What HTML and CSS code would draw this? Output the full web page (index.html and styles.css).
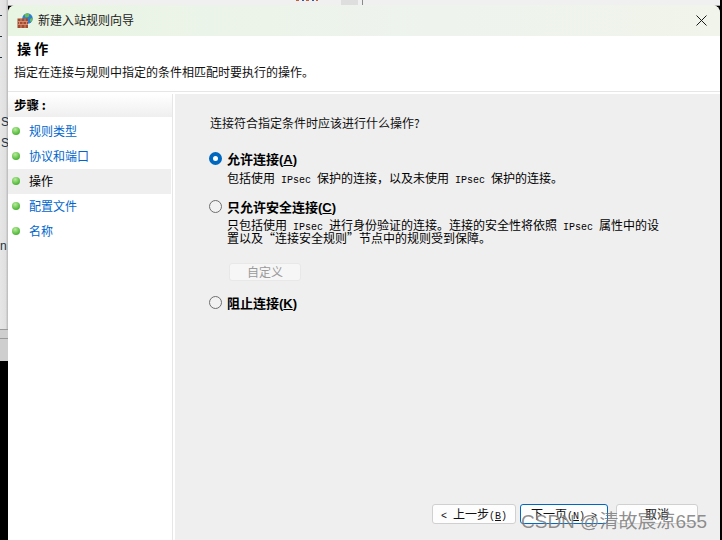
FILE: index.html
```html
<!DOCTYPE html>
<html lang="zh-CN">
<head>
<meta charset="utf-8">
<title>新建入站规则向导</title>
<link rel="stylesheet" href="styles.css">
</head>
<body>
<div class="desktop">
  <div class="top-strip">
    <span class="strip-bits"></span>
    <span class="strip-panel"></span>
    <span class="strip-line l1"></span>
  </div>
  <div class="left-strip">
    <span class="tick t1"></span>
    <span class="tick t2"></span>
    <span class="tick t3"></span>
    <span class="strip-char c4">S</span>
    <span class="strip-char c5">S</span>
    <span class="strip-char c6">n</span>
    <span class="band b1"></span>
    <span class="band b2"></span>
  </div>
  <div class="dialog">
    <div class="titlebar">
      <svg class="app-icon" width="16" height="15" viewBox="0 0 16 15">
        <circle cx="10.5" cy="5.5" r="5.2" fill="#2f7fd0"/>
        <path d="M7.5 1.4c1.800-1.200 3.800-1 5 0l-1 2.600-3 .6zM13 6l2.600-1.200-.4 3-2.200 1z" fill="#6cc04a"/>
        <rect x="0.500" y="5.500" width="10.500" height="9.500" fill="#a34a30"/>
        <path d="M0.500 8.500h10.500M0.500 11.500h10.500M4 5.500v3M8 5.500v3M2.500 8.500v3M6 8.500v3M9.500 8.500v3M4 11.500v3.500M8 11.500v3.500" stroke="#d99a80" stroke-width="0.800" fill="none"/>
      </svg>
      <span class="title-text">新建入站规则向导</span>
      <svg class="close" width="11" height="11" viewBox="0 0 11 11"><path d="M.5.5l10 10M10.500.5l-10 10" stroke="#1a1a1a" stroke-width="1" fill="none"/></svg>
    </div>
    <div class="header">
      <div class="heading">操 作</div>
      <div class="subheading">指定在连接与规则中指定的条件相匹配时要执行的操作。</div>
    </div>
    <div class="body">
      <aside class="sidebar">
        <div class="steps-head">步骤 :</div>
        <ul class="steps">
          <li class="step"><span class="dot"></span><span class="link">规则类型</span></li>
          <li class="step"><span class="dot"></span><span class="link">协议和端口</span></li>
          <li class="step current"><span class="dot"></span><span>操作</span></li>
          <li class="step"><span class="dot"></span><span class="link">配置文件</span></li>
          <li class="step"><span class="dot"></span><span class="link">名称</span></li>
        </ul>
      </aside>
      <main class="content">
        <p class="question">连接符合指定条件时应该进行什么操作?</p>
        <div class="option first">
          <span class="radio checked"></span>
          <div class="option-text">
            <div class="option-label">允许连接<span class="key">(<u>A</u>)</span></div>
            <div class="option-desc">包括使用<span class="mono"> IPsec </span>保护的连接&#xFF0C;以及未使用<span class="mono"> IPsec </span>保护的连接。</div>
          </div>
        </div>
        <div class="option second">
          <span class="radio"></span>
          <div class="option-text">
            <div class="option-label">只允许安全连接<span class="key">(<u>C</u>)</span></div>
            <div class="option-desc tight">只包括使用<span class="mono"> IPsec </span>进行身份验证的连接。连接的安全性将依照<span class="mono"> IPsec </span>属性中的设置以及“连接安全规则”节点中的规则受到保障。</div>
            <button class="btn custom" disabled>自定义</button>
          </div>
        </div>
        <div class="option third">
          <span class="radio"></span>
          <div class="option-text">
            <div class="option-label">阻止连接<span class="key">(<u>K</u>)</span></div>
          </div>
        </div>
        <div class="footer">
          <button class="btn nav back"><span class="mono">&lt; </span>上一步<span class="mono">(<u>B</u>)</span></button>
          <button class="btn nav primary">下一页<span class="mono">(<u>N</u>) &gt;</span></button>
          <button class="btn nav cancel">取消</button>
        </div>
      </main>
    </div>
  </div>
  <div class="watermark">CSDN @清故宸凉655</div>
</div>
</body>
</html>
```
FILE: styles.css
```css
* { box-sizing: border-box; }
html, body { margin: 0; padding: 0; }
body { width: 722px; height: 540px; overflow: hidden; font-family: "Noto Sans CJK SC", "Liberation Sans", sans-serif; }
.desktop { position: relative; width: 722px; height: 540px; background: #000; overflow: hidden; }
.top-strip { position: absolute; left: 0; top: 0; width: 720px; height: 6px; background: #f0f0f0; border-bottom: 1px solid #a8a8a8; }
.strip-bits { position: absolute; left: 296px; top: 0; width: 22px; height: 1px; background: repeating-linear-gradient(90deg, #c0603a 0 3px, #f0f0f0 3px 6px, #3a5a9a 6px 8px, #f0f0f0 8px 10px); }
.strip-panel { position: absolute; left: 341px; top: 0; width: 17px; height: 5px; background: #dedede; }
.strip-line { position: absolute; top: 0; width: 1px; height: 5px; background: #8a8a8a; }
.l1 { left: 362px; }
.left-strip { position: absolute; left: 0; top: 0; width: 8px; height: 361px; background: linear-gradient(rgba(0, 0, 0, 0) 329px, #cecece 329px), linear-gradient(90deg, #e6e6e6, #e0e0e0 70%, #b8b8b8); overflow: hidden; }
.tick { position: absolute; left: 0; width: 2px; height: 1px; background: #234; }
.t1 { top: 15px; } .t2 { top: 36px; } .t3 { top: 57px; }
.strip-char { position: absolute; left: 1px; font-size: 12px; line-height: 14px; color: #234; font-family: "Liberation Sans", sans-serif; }
.c4 { top: 115px; } .c5 { top: 136px; } .c6 { top: 239px; left: 0; }
.band { position: absolute; left: 0; width: 8px; height: 1px; background: #9a9a9a; }
.b1 { top: 329px; } .b2 { top: 338px; }
.dialog { position: absolute; left: 8px; top: 5px; width: 712px; height: 535px; background: #fff; border-radius: 8px 8px 0 0; display: flex; flex-direction: column; overflow: hidden; }
.titlebar { height: 31px; flex: none; background: linear-gradient(90deg, #e9f5e3, #eef3ee 60%, #f0f4ea); display: flex; align-items: center; padding: 0 13px 1px 9px; font-size: 12px; color: #1a1a1a; }
.app-icon { flex: none; margin-right: 5px; }
.title-text { flex: 1; line-height: 16px; }
.close { flex: none; }
.header { height: 56px; flex: none; padding: 0 6px; border-bottom: 1px solid #e6e6e6; }
.heading { font-size: 14px; font-weight: 700; line-height: 20px; padding: 2px 0 0 3px; height: 22px; color: #000; }
.subheading { font-size: 12px; line-height: 16px; margin-top: 6px; color: #111; }
.body { flex: 1; display: flex; background: #fff; padding-top: 2px; min-height: 0; }
.sidebar { width: 165px; flex: none; background: #fff; border-right: 1px solid #e6e6e6; margin-right: 2px; }
.steps-head { height: 23px; padding-left: 6px; font-size: 12.5px; font-weight: 700; line-height: 22px; background: linear-gradient(#fff, #efefef); color: #000; }
.steps { list-style: none; margin: 2px 0 0; padding: 0; }
.step { height: 25px; display: flex; align-items: center; padding: 0 0 2px 4px; font-size: 12px; color: #000; margin-right: 1px; }
.step.current { background: #efefef; }
.dot { width: 8px; height: 8px; border-radius: 50%; margin-right: 9px; flex: none; background: radial-gradient(circle at 40% 30%, #b8ec9c, #55bb3c 65%, #3f9c2e); }
.link { color: #0066cc; }
.content { flex: 1; background: #efefef; position: relative; padding: 21px 0 0 35px; min-width: 0; font-size: 12px; color: #111; }
.question { margin: 0; line-height: 16px; height: 16px; }
.option { display: flex; margin-left: -1px; }
.first { margin-top: 20px; }
.second { margin-top: 13px; }
.third { margin-top: 14px; }
.radio { width: 13px; height: 13px; border-radius: 50%; border: 1px solid #6e6e6e; margin: 1px 5px 0 0; flex: none; background: #f2f2f2; }
.radio.checked { border: 4px solid #0067c0; background: #fff; }
.option-text { flex: 1; min-width: 0; }
.option-label { font-weight: 700; font-size: 13px; line-height: 15px; color: #000; }
.key { font-family: "Liberation Sans", sans-serif; font-size: 13px; line-height: 0; }
.option-desc { line-height: 16px; margin-top: 4px; width: 440px; color: #000; }
.option-desc.tight { line-height: 13px; }
.mono { font-family: "Liberation Mono", monospace; font-size: 10px; line-height: 0; }
.btn { font-family: inherit; font-size: 12px; height: 20px; padding: 0; border-radius: 3px; border: 1px solid #d0d0d0; background: #fdfdfd; color: #111; line-height: 16px; white-space: nowrap; }
.custom { display: block; margin-top: 19px; margin-left: 2px; width: 72px; height: 18px; background: #f6f6f6; border-color: #e8e8e8; color: #9a9a9a; }
.footer { position: absolute; top: 410px; left: 257px; display: flex; gap: 4px; }
.nav { width: 84px; }
.nav.primary { width: 88px; border: 1px solid #0067c0; }
.nav.cancel { width: 82px; margin-left: 4px; }
.watermark { position: absolute; left: 521px; top: 510px; font-size: 19px; line-height: 24px; color: rgba(70, 70, 70, 0.62); text-shadow: 0 0 1px rgba(255, 255, 255, 0.6); font-family: "Liberation Sans", "Noto Sans CJK SC", sans-serif; white-space: nowrap; }
```
